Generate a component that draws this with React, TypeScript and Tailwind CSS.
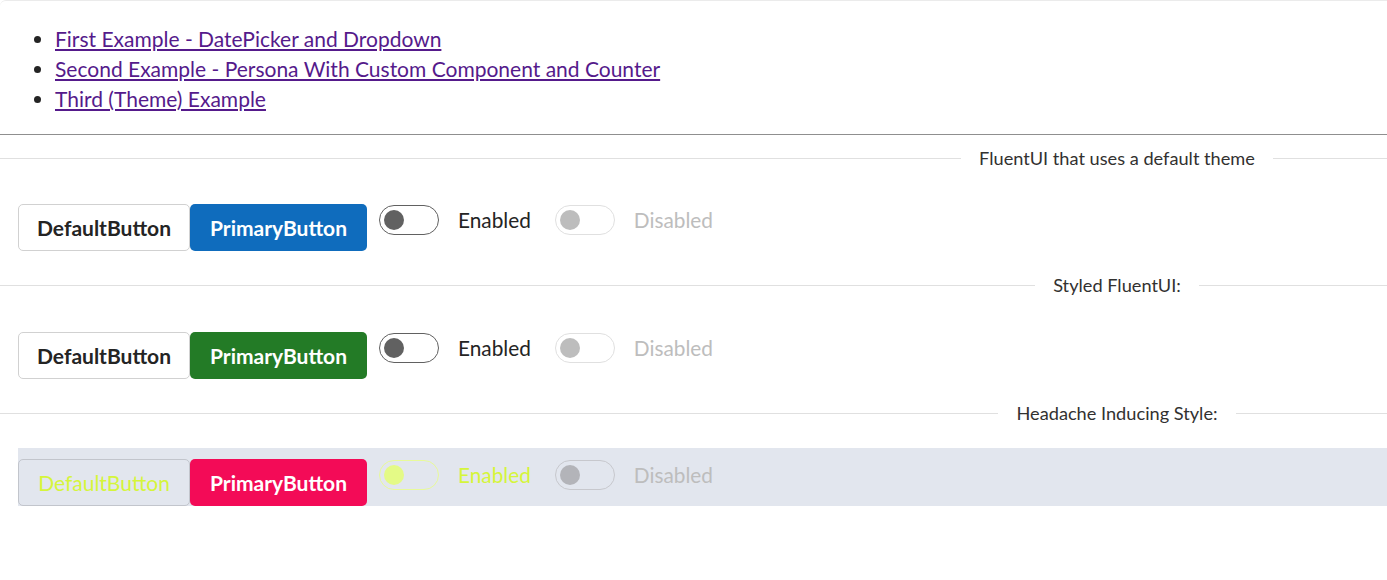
import React from 'react'

const font = { fontFamily: '"Segoe UI", Lato, "Open Sans", sans-serif' }

type Variant = 'default' | 'styled' | 'headache'

function Separator({ label, right, mt }: { label: string; right: string; mt: string }) {
  return (
    <div className={`flex items-center h-[24px] ${mt}`}>
      <div className="flex-1 h-px bg-[#e0e0e0]" />
      <div className={`flex items-center ${right}`}>
        <div className="flex-1 h-px bg-[#e0e0e0]" />
        <span className="px-[18px] text-[18.2px] leading-[24px] text-[#323130] whitespace-nowrap">{label}</span>
        <div className="flex-1 h-px bg-[#e0e0e0]" />
      </div>
    </div>
  )
}

function Toggle({ track, knob }: { track: string; knob: string }) {
  return (
    <div className={`w-[60px] h-[30px] rounded-full border-[1.5px] flex items-center pl-[4px] shrink-0 ${track}`}>
      <div className={`w-[20px] h-[20px] rounded-full ${knob}`} />
    </div>
  )
}

function Row({ variant, mt }: { variant: Variant; mt: string }) {
  const headache = variant === 'headache'
  const primaryBg =
    variant === 'default' ? 'bg-[#0f6cbd]' : variant === 'styled' ? 'bg-[#237b26]' : 'bg-[#f30b57]'
  return (
    <div className={`ml-[18px] h-[58px] pt-[11px] flex items-start ${headache ? 'bg-[#e2e6ee]' : ''} ${mt}`}>
      <button
        className={`w-[172px] h-[47px] rounded-[5px] border text-[21px] ${
          headache
            ? 'border-[#c2c5cc] text-[#d5f53b] font-normal bg-[#e2e6ee]'
            : 'border-[#d1d1d1] text-[#242424] font-bold bg-white'
        }`}
      >
        DefaultButton
      </button>
      <button className={`w-[177px] h-[47px] rounded-[5px] text-[21px] font-bold text-white ${primaryBg}`}>
        PrimaryButton
      </button>
      <div className="ml-[12px] mt-px flex items-center">
        {headache ? (
          <Toggle track="border-[#e8fa9a]" knob="bg-[#e4fa86]" />
        ) : (
          <Toggle track="border-[#616161]" knob="bg-[#616161]" />
        )}
        <span className={`ml-[19px] text-[20.8px] leading-[30px] ${headache ? 'text-[#d5f53b]' : 'text-[#242424]'}`}>
          Enabled
        </span>
        <div className="ml-[24px]">
          {headache ? (
            <Toggle track="border-[#c7c8cd]" knob="bg-[#b3b4b9]" />
          ) : (
            <Toggle track="border-[#e0e0e0]" knob="bg-[#bdbdbd]" />
          )}
        </div>
        <span className="ml-[19px] text-[20.8px] leading-[30px] text-[#bdbdbd]">Disabled</span>
      </div>
    </div>
  )
}

export default function App() {
  return (
    <div className="min-h-screen bg-white" style={font}>
      <div className="border-t border-[#ebebeb] rounded-tl-[6px]">
        <ul className="mt-[23px] ml-[15px] pl-[40px] list-disc text-[21px] leading-[30px] marker:text-[#242424]">
          <li>
            <a href="#" className="underline text-[#551a8b]">First Example - DatePicker and Dropdown</a>
          </li>
          <li>
            <a href="#" className="underline text-[#551a8b]">Second Example - Persona With Custom Component and Counter</a>
          </li>
          <li>
            <a href="#" className="underline text-[#551a8b]">Third (Theme) Example</a>
          </li>
        </ul>
        <div className="mt-[20px] h-px bg-[#8f8f8f]" />

        <Separator label="FluentUI that uses a default theme" right="w-[540px]" mt="mt-[11px]" />
        <Row variant="default" mt="mt-[23px]" />

        <Separator label="Styled FluentUI:" right="w-[540px]" mt="mt-[22px]" />
        <Row variant="styled" mt="mt-[24px]" />

        <Separator label="Headache Inducing Style:" right="w-[540px]" mt="mt-[22px]" />
        <Row variant="headache" mt="mt-[23px]" />
      </div>
    </div>
  )
}
